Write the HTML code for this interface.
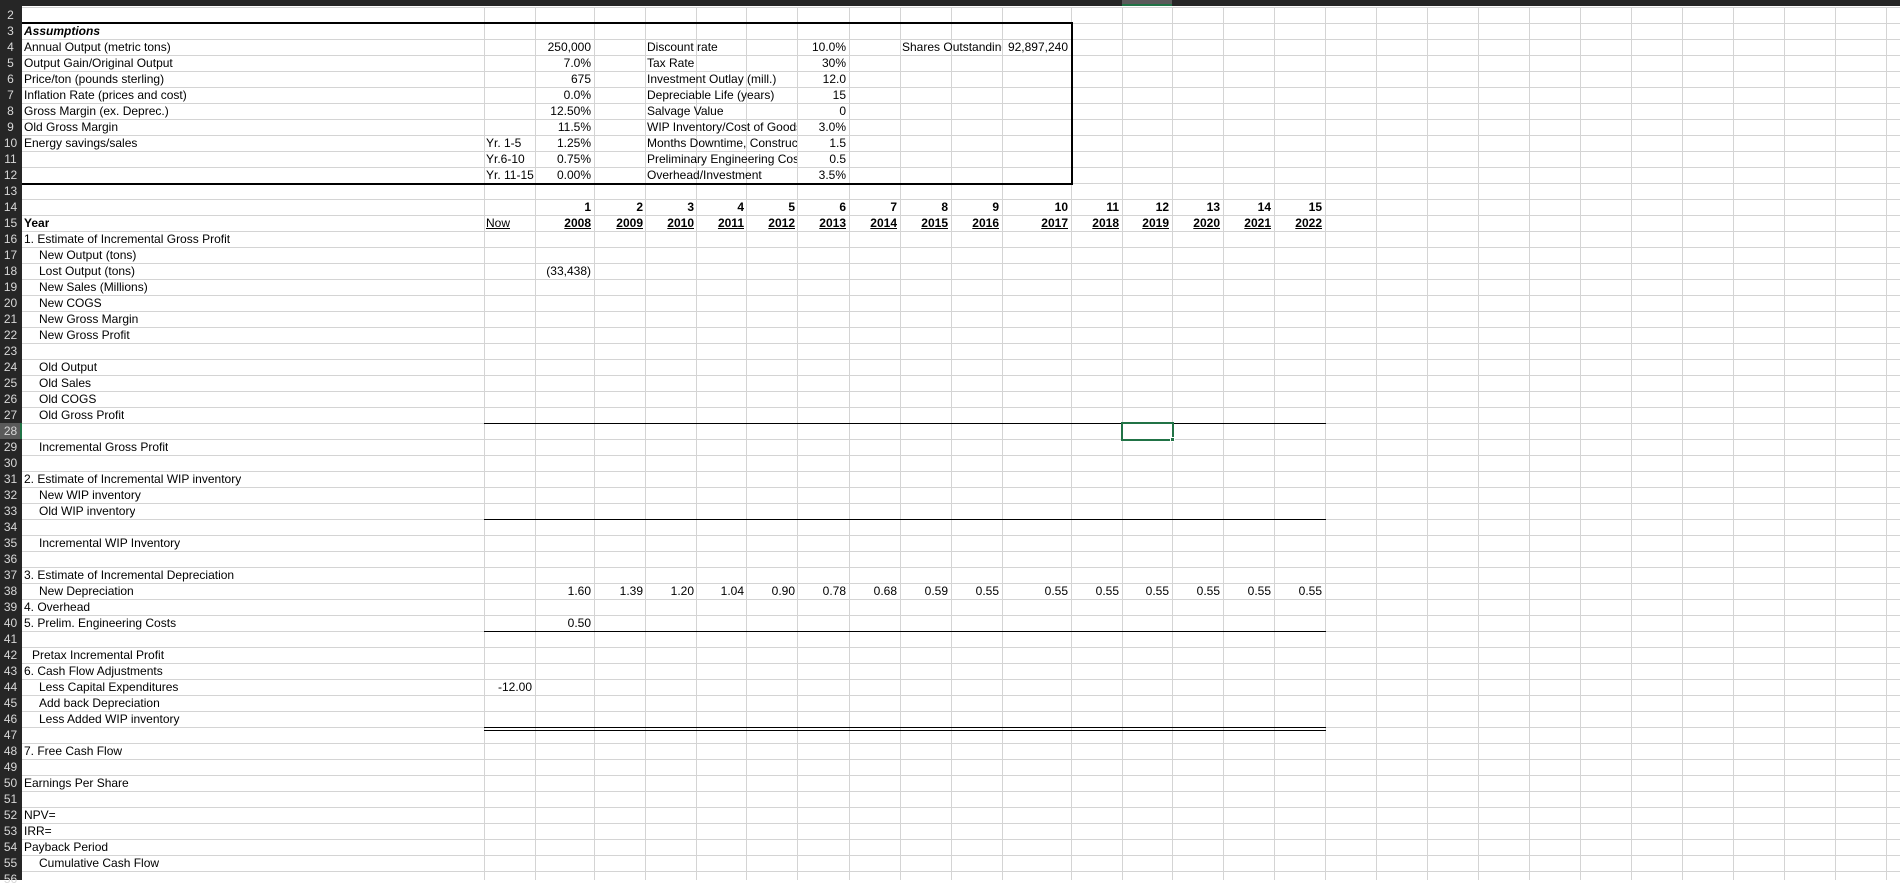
<!DOCTYPE html>
<html><head><meta charset="utf-8"><style>
*{margin:0;padding:0;box-sizing:border-box}
body{width:1900px;height:880px;overflow:hidden;background:#fff;position:relative;font-family:"Liberation Sans",sans-serif;font-size:12px;color:#000}
#grid{position:absolute;left:22px;top:7px;width:1878px;height:873px;background:repeating-linear-gradient(to bottom,#d4d4d4 0,#d4d4d4 1px,transparent 1px,transparent 16px)}
.v{position:absolute;top:7px;height:873px;width:1px;background:#d4d4d4}
#colhdr{position:absolute;left:0;top:0;width:1900px;height:6px;background:#262626}
#rowhdr{position:absolute;left:0;top:6px;width:22px;height:874px;background:#262626}
.rn{position:absolute;left:0;width:21px;height:16px;line-height:17px;text-align:center;color:#d8d8d8;font-size:12px}
.t{position:absolute;height:16px;line-height:17px;white-space:nowrap;overflow:hidden}
.r{text-align:right}
.b{font-weight:bold}
.u{text-decoration:underline}
.h{position:absolute;height:1px;background:#000}
</style></head><body>
<div id="grid"></div>
<div class="v" style="left:484px"></div><div class="v" style="left:535px"></div><div class="v" style="left:594px"></div><div class="v" style="left:645px"></div><div class="v" style="left:696px"></div><div class="v" style="left:746px"></div><div class="v" style="left:797px"></div><div class="v" style="left:849px"></div><div class="v" style="left:900px"></div><div class="v" style="left:951px"></div><div class="v" style="left:1002px"></div><div class="v" style="left:1071px"></div><div class="v" style="left:1122px"></div><div class="v" style="left:1172px"></div><div class="v" style="left:1223px"></div><div class="v" style="left:1274px"></div><div class="v" style="left:1325px"></div><div class="v" style="left:1376px"></div><div class="v" style="left:1427px"></div><div class="v" style="left:1478px"></div><div class="v" style="left:1529px"></div><div class="v" style="left:1580px"></div><div class="v" style="left:1631px"></div><div class="v" style="left:1682px"></div><div class="v" style="left:1733px"></div><div class="v" style="left:1784px"></div><div class="v" style="left:1835px"></div><div class="v" style="left:1886px"></div>
<div id="colhdr"></div>
<div style="position:absolute;left:1122px;top:0;width:50px;height:6px;background:#5a5a5a;border-bottom:2px solid #217346"></div>
<div id="rowhdr"></div>
<div style="position:absolute;left:0;top:423px;width:22px;height:16px;background:#5a5a5a;border-right:2px solid #217346"></div>
<div class="rn" style="top:7px">2</div><div class="rn" style="top:23px">3</div><div class="rn" style="top:39px">4</div><div class="rn" style="top:55px">5</div><div class="rn" style="top:71px">6</div><div class="rn" style="top:87px">7</div><div class="rn" style="top:103px">8</div><div class="rn" style="top:119px">9</div><div class="rn" style="top:135px">10</div><div class="rn" style="top:151px">11</div><div class="rn" style="top:167px">12</div><div class="rn" style="top:183px">13</div><div class="rn" style="top:199px">14</div><div class="rn" style="top:215px">15</div><div class="rn" style="top:231px">16</div><div class="rn" style="top:247px">17</div><div class="rn" style="top:263px">18</div><div class="rn" style="top:279px">19</div><div class="rn" style="top:295px">20</div><div class="rn" style="top:311px">21</div><div class="rn" style="top:327px">22</div><div class="rn" style="top:343px">23</div><div class="rn" style="top:359px">24</div><div class="rn" style="top:375px">25</div><div class="rn" style="top:391px">26</div><div class="rn" style="top:407px">27</div><div class="rn" style="top:423px">28</div><div class="rn" style="top:439px">29</div><div class="rn" style="top:455px">30</div><div class="rn" style="top:471px">31</div><div class="rn" style="top:487px">32</div><div class="rn" style="top:503px">33</div><div class="rn" style="top:519px">34</div><div class="rn" style="top:535px">35</div><div class="rn" style="top:551px">36</div><div class="rn" style="top:567px">37</div><div class="rn" style="top:583px">38</div><div class="rn" style="top:599px">39</div><div class="rn" style="top:615px">40</div><div class="rn" style="top:631px">41</div><div class="rn" style="top:647px">42</div><div class="rn" style="top:663px">43</div><div class="rn" style="top:679px">44</div><div class="rn" style="top:695px">45</div><div class="rn" style="top:711px">46</div><div class="rn" style="top:727px">47</div><div class="rn" style="top:743px">48</div><div class="rn" style="top:759px">49</div><div class="rn" style="top:775px">50</div><div class="rn" style="top:791px">51</div><div class="rn" style="top:807px">52</div><div class="rn" style="top:823px">53</div><div class="rn" style="top:839px">54</div><div class="rn" style="top:855px">55</div><div class="rn" style="top:871px">56</div>

<div style="position:absolute;left:22px;top:22px;width:1051px;height:163px;border:2px solid #000;border-left:none"></div>

<div class="t b" style="left:24px;top:23px;font-style:italic">Assumptions</div>
<div class="t" style="left:24px;top:39px">Annual Output (metric tons)</div>
<div class="t" style="left:24px;top:55px">Output Gain/Original Output</div>
<div class="t" style="left:24px;top:71px">Price/ton (pounds sterling)</div>
<div class="t" style="left:24px;top:87px">Inflation Rate (prices and cost)</div>
<div class="t" style="left:24px;top:103px">Gross Margin (ex. Deprec.)</div>
<div class="t" style="left:24px;top:119px">Old Gross Margin</div>
<div class="t" style="left:24px;top:135px">Energy savings/sales</div>
<div class="t" style="left:486px;top:135px">Yr. 1-5</div>
<div class="t" style="left:486px;top:151px">Yr.6-10</div>
<div class="t" style="left:486px;top:167px">Yr. 11-15</div>
<div class="t r" style="left:535px;width:56px;top:39px">250,000</div>
<div class="t r" style="left:535px;width:56px;top:55px">7.0%</div>
<div class="t r" style="left:535px;width:56px;top:71px">675</div>
<div class="t r" style="left:535px;width:56px;top:87px">0.0%</div>
<div class="t r" style="left:535px;width:56px;top:103px">12.50%</div>
<div class="t r" style="left:535px;width:56px;top:119px">11.5%</div>
<div class="t r" style="left:535px;width:56px;top:135px">1.25%</div>
<div class="t r" style="left:535px;width:56px;top:151px">0.75%</div>
<div class="t r" style="left:535px;width:56px;top:167px">0.00%</div>
<div class="t" style="left:647px;width:150px;top:39px">Discount rate</div>
<div class="t" style="left:647px;width:150px;top:55px">Tax Rate</div>
<div class="t" style="left:647px;width:150px;top:71px">Investment Outlay (mill.)</div>
<div class="t" style="left:647px;width:150px;top:87px">Depreciable Life (years)</div>
<div class="t" style="left:647px;width:150px;top:103px">Salvage Value</div>
<div class="t" style="left:647px;width:150px;top:119px">WIP Inventory/Cost of Goods</div>
<div class="t" style="left:647px;width:150px;top:135px">Months Downtime, Construction</div>
<div class="t" style="left:647px;width:150px;top:151px">Preliminary Engineering Costs</div>
<div class="t" style="left:647px;width:150px;top:167px">Overhead/Investment</div>
<div class="t r" style="left:797px;width:49px;top:39px">10.0%</div>
<div class="t r" style="left:797px;width:49px;top:55px">30%</div>
<div class="t r" style="left:797px;width:49px;top:71px">12.0</div>
<div class="t r" style="left:797px;width:49px;top:87px">15</div>
<div class="t r" style="left:797px;width:49px;top:103px">0</div>
<div class="t r" style="left:797px;width:49px;top:119px">3.0%</div>
<div class="t r" style="left:797px;width:49px;top:135px">1.5</div>
<div class="t r" style="left:797px;width:49px;top:151px">0.5</div>
<div class="t r" style="left:797px;width:49px;top:167px">3.5%</div>
<div class="t" style="left:902px;width:100px;top:39px">Shares Outstanding</div>
<div class="t r" style="left:1002px;width:66px;top:39px">92,897,240</div>

<div class="t b" style="left:24px;top:215px">Year</div>
<div class="t u" style="left:486px;top:215px">Now</div>
<div class="t r b" style="left:535px;width:56px;top:199px">1</div><div class="t r b u" style="left:535px;width:56px;top:215px">2008</div>
<div class="t r b" style="left:594px;width:49px;top:199px">2</div><div class="t r b u" style="left:594px;width:49px;top:215px">2009</div>
<div class="t r b" style="left:645px;width:49px;top:199px">3</div><div class="t r b u" style="left:645px;width:49px;top:215px">2010</div>
<div class="t r b" style="left:696px;width:48px;top:199px">4</div><div class="t r b u" style="left:696px;width:48px;top:215px">2011</div>
<div class="t r b" style="left:746px;width:49px;top:199px">5</div><div class="t r b u" style="left:746px;width:49px;top:215px">2012</div>
<div class="t r b" style="left:797px;width:49px;top:199px">6</div><div class="t r b u" style="left:797px;width:49px;top:215px">2013</div>
<div class="t r b" style="left:849px;width:48px;top:199px">7</div><div class="t r b u" style="left:849px;width:48px;top:215px">2014</div>
<div class="t r b" style="left:900px;width:48px;top:199px">8</div><div class="t r b u" style="left:900px;width:48px;top:215px">2015</div>
<div class="t r b" style="left:951px;width:48px;top:199px">9</div><div class="t r b u" style="left:951px;width:48px;top:215px">2016</div>
<div class="t r b" style="left:1002px;width:66px;top:199px">10</div><div class="t r b u" style="left:1002px;width:66px;top:215px">2017</div>
<div class="t r b" style="left:1071px;width:48px;top:199px">11</div><div class="t r b u" style="left:1071px;width:48px;top:215px">2018</div>
<div class="t r b" style="left:1122px;width:47px;top:199px">12</div><div class="t r b u" style="left:1122px;width:47px;top:215px">2019</div>
<div class="t r b" style="left:1172px;width:48px;top:199px">13</div><div class="t r b u" style="left:1172px;width:48px;top:215px">2020</div>
<div class="t r b" style="left:1223px;width:48px;top:199px">14</div><div class="t r b u" style="left:1223px;width:48px;top:215px">2021</div>
<div class="t r b" style="left:1274px;width:48px;top:199px">15</div><div class="t r b u" style="left:1274px;width:48px;top:215px">2022</div>

<div class="t" style="left:24px;top:231px">1. Estimate of Incremental Gross Profit</div>
<div class="t" style="left:39px;top:247px">New Output (tons)</div>
<div class="t" style="left:39px;top:263px">Lost Output (tons)</div>
<div class="t r" style="left:535px;width:56px;top:263px">(33,438)</div>
<div class="t" style="left:39px;top:279px">New Sales (Millions)</div>
<div class="t" style="left:39px;top:295px">New COGS</div>
<div class="t" style="left:39px;top:311px">New Gross Margin</div>
<div class="t" style="left:39px;top:327px">New Gross Profit</div>
<div class="t" style="left:39px;top:359px">Old Output</div>
<div class="t" style="left:39px;top:375px">Old Sales</div>
<div class="t" style="left:39px;top:391px">Old COGS</div>
<div class="t" style="left:39px;top:407px">Old Gross Profit</div>
<div class="t" style="left:39px;top:439px">Incremental Gross Profit</div>
<div class="t" style="left:24px;top:471px">2. Estimate of Incremental WIP inventory</div>
<div class="t" style="left:39px;top:487px">New WIP inventory</div>
<div class="t" style="left:39px;top:503px">Old WIP inventory</div>
<div class="t" style="left:39px;top:535px">Incremental WIP Inventory</div>
<div class="t" style="left:24px;top:567px">3. Estimate of Incremental Depreciation</div>
<div class="t" style="left:39px;top:583px">New Depreciation</div>
<div class="t" style="left:24px;top:599px">4. Overhead</div>
<div class="t" style="left:24px;top:615px">5. Prelim. Engineering Costs</div>
<div class="t r" style="left:535px;width:56px;top:615px">0.50</div>
<div class="t" style="left:32px;top:647px">Pretax Incremental Profit</div>
<div class="t" style="left:24px;top:663px">6. Cash Flow Adjustments</div>
<div class="t" style="left:39px;top:679px">Less Capital Expenditures</div>
<div class="t r" style="left:484px;width:48px;top:679px">-12.00</div>
<div class="t" style="left:39px;top:695px">Add back Depreciation</div>
<div class="t" style="left:39px;top:711px">Less Added WIP inventory</div>
<div class="t" style="left:24px;top:743px">7. Free Cash Flow</div>
<div class="t" style="left:24px;top:775px">Earnings Per Share</div>
<div class="t" style="left:24px;top:807px">NPV=</div>
<div class="t" style="left:24px;top:823px">IRR=</div>
<div class="t" style="left:24px;top:839px">Payback Period</div>
<div class="t" style="left:39px;top:855px">Cumulative Cash Flow</div>

<div class="t r" style="left:535px;width:56px;top:583px">1.60</div>
<div class="t r" style="left:594px;width:49px;top:583px">1.39</div>
<div class="t r" style="left:645px;width:49px;top:583px">1.20</div>
<div class="t r" style="left:696px;width:48px;top:583px">1.04</div>
<div class="t r" style="left:746px;width:49px;top:583px">0.90</div>
<div class="t r" style="left:797px;width:49px;top:583px">0.78</div>
<div class="t r" style="left:849px;width:48px;top:583px">0.68</div>
<div class="t r" style="left:900px;width:48px;top:583px">0.59</div>
<div class="t r" style="left:951px;width:48px;top:583px">0.55</div>
<div class="t r" style="left:1002px;width:66px;top:583px">0.55</div>
<div class="t r" style="left:1071px;width:48px;top:583px">0.55</div>
<div class="t r" style="left:1122px;width:47px;top:583px">0.55</div>
<div class="t r" style="left:1172px;width:48px;top:583px">0.55</div>
<div class="t r" style="left:1223px;width:48px;top:583px">0.55</div>
<div class="t r" style="left:1274px;width:48px;top:583px">0.55</div>

<div class="h" style="left:484px;width:842px;top:423px"></div>
<div class="h" style="left:484px;width:842px;top:519px"></div>
<div class="h" style="left:484px;width:842px;top:631px"></div>
<div class="h" style="left:484px;width:842px;top:727px"></div>
<div class="h" style="left:484px;width:842px;top:730px"></div>

<div style="position:absolute;left:1121px;top:422px;width:53px;height:19px;border:2px solid #217346"></div>
<div style="position:absolute;left:1170px;top:437px;width:5px;height:5px;background:#217346;border:1px solid #fff"></div>
</body></html>
